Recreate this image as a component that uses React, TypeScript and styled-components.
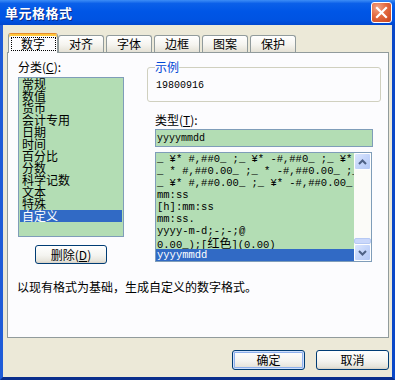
import styled, { createGlobalStyle, css } from "styled-components";

const CJK = `"Noto Sans CJK SC", "Liberation Sans", sans-serif`;
const MONO = `"Liberation Mono", "Noto Sans CJK SC", monospace`;
const GREEN = "#B3DDB4";
const SELECT = "#316AC5";

const GlobalStyle = createGlobalStyle`
  html, body {
    margin: 0;
    padding: 0;
    background: #ECE9D8;
  }
  body {
    font-family: ${CJK};
    font-size: 12px;
    color: #000;
  }
  * {
    box-sizing: border-box;
  }
`;

const Window = styled.div`
  width: 395px;
  height: 380px;
  display: flex;
  flex-direction: column;
  background: #ECE9D8;
`;

const TitleBar = styled.div`
  height: 25px;
  flex: none;
  display: flex;
  align-items: center;
  justify-content: space-between;
  padding: 0 3px 0 5px;
  background: linear-gradient(180deg, #3D8DF6 0%, #0B60E9 14%, #0056E6 45%, #0053E2 80%, #0047CF 100%);
`;

const Title = styled.span`
  color: #fff;
  font-family: ${CJK};
  font-weight: bold;
  font-size: 13px;
  letter-spacing: 0.5px;
  text-shadow: 1px 1px 0 #0A2A8A;
`;

const CloseButton = styled.div`
  width: 21px;
  height: 21px;
  border: 1px solid #fff;
  border-radius: 3px;
  background: radial-gradient(circle at 30% 25%, #F2A487 0%, #E3693F 45%, #C8431C 100%);
  display: flex;
  align-items: center;
  justify-content: center;
`;

const Frame = styled.div`
  flex: 1;
  display: flex;
  flex-direction: column;
  border-left: 3px solid #1F5CD8;
  border-right: 3px solid #0A48C8;
  border-bottom: 3px solid #0A2E8C;
  padding: 0 3px 0 4px;
`;

const TabStrip = styled.div`
  height: 27px;
  flex: none;
  display: flex;
  align-items: flex-end;
  gap: 2px;
  padding-left: 3px;
  position: relative;
  z-index: 1;
`;

const Tab = styled.div<{ $active?: boolean }>`
  width: 46px;
  height: 17px;
  display: flex;
  align-items: center;
  justify-content: center;
  border: 1px solid #919B9C;
  border-bottom: 0;
  border-radius: 3px 3px 0 0;
  background: linear-gradient(180deg, #FFFFFF 0%, #F5F4EF 55%, #E4E1D5 100%);
  font-size: 12px;
  line-height: 14px;
  ${(p) =>
    p.$active &&
    css`
      width: 50px;
      height: 20px;
      margin: 0 -2px -1px;
      background: #FCFCFE;
      border-top: 1px solid #E68B2C;
      box-shadow: inset 0 2px 0 #FFC83C;
      padding-top: 1px;
    `}
`;

const FocusLabel = styled.span`
  display: flex;
  align-items: center;
  justify-content: center;
  width: 45px;
  height: 14px;
  border: 1px dotted #000;
`;

const Panel = styled.div`
  height: 286px;
  flex: none;
  display: flex;
  flex-direction: column;
  border: 1px solid #919B9C;
  background: #FCFCFE;
  padding: 0 6px 0 10px;
`;

const Columns = styled.div`
  display: grid;
  grid-template-columns: 106px 234px;
  column-gap: 23px;
  align-items: start;
`;

const LeftColumn = styled.div`
  display: flex;
  flex-direction: column;
`;

const RightColumn = styled.div`
  display: flex;
  flex-direction: column;
`;

const Label = styled.div<{ $top: number; $left?: number }>`
  margin: ${(p) => p.$top}px 0 0 ${(p) => p.$left ?? 0}px;
  height: 14px;
  line-height: 14px;
  font-size: 12px;
  white-space: nowrap;
`;

const CategoryList = styled.div`
  margin-top: 3px;
  height: 160px;
  border: 1px solid #7F9DB9;
  background: ${GREEN};
  padding: 0 1px;
`;

const CategoryItem = styled.div<{ $selected?: boolean }>`
  height: 12px;
  line-height: 12px;
  padding-left: 2px;
  font-size: 12px;
  white-space: nowrap;
  ${(p) =>
    p.$selected &&
    css`
      background: ${SELECT};
      color: #fff;
    `}
`;

const Button = styled.button<{ $w: number; $h: number; $default?: boolean }>`
  width: ${(p) => p.$w}px;
  height: ${(p) => p.$h}px;
  padding: 0;
  border: 1px solid #003C74;
  border-radius: 3px;
  background: linear-gradient(180deg, #FFFFFF 0%, #F4F4F0 55%, #E6E4DB 88%, #D6D0C5 100%);
  font-family: ${CJK};
  font-size: 12px;
  line-height: 14px;
  color: #000;
  ${(p) =>
    p.$default &&
    css`
      box-shadow: inset 0 0 0 1px #CFE0FC, inset 0 0 0 2px #8EB0EC;
    `}
`;

const DeleteButton = styled(Button)`
  margin-top: 8px;
  align-self: center;
`;

const GroupBox = styled.fieldset`
  margin: 7px 0 0;
  min-width: 0;
  border: 1px solid #D0D0BF;
  border-radius: 3px;
  padding: 5px 6px 8px 7px;
`;

const GroupLegend = styled.legend`
  padding: 0;
  height: 14px;
  line-height: 14px;
  font-size: 12px;
  color: #0046D5;
`;

const SampleText = styled.div`
  height: 14px;
  line-height: 14px;
  padding-left: 1px;
  font-family: ${MONO};
  font-size: 10px;
`;

const TypeInput = styled.input`
  margin: 2px 8px 0 8px;
  height: 18px;
  border: 1px solid #7F9DB9;
  background: ${GREEN};
  padding: 0 0 0 1px;
  font-family: ${MONO};
  font-size: 10px;
  color: #000;
  outline: none;
`;

const FormatList = styled.div`
  margin: 5px 9px 0 8px;
  height: 110px;
  border: 1px solid #7F9DB9;
  background: ${GREEN};
  display: flex;
`;

const FormatRows = styled.div`
  flex: 1;
  min-width: 0;
  overflow: hidden;
`;

const FormatRow = styled.div<{ $selected?: boolean }>`
  height: 12px;
  line-height: 12px;
  padding-left: 1px;
  font-family: ${MONO};
  font-size: 10.5px;
  white-space: nowrap;
  overflow: hidden;
  ${(p) =>
    p.$selected &&
    css`
      background: ${SELECT};
      color: #fff;
    `}
`;

const Cjk = styled.span`
  font-family: ${CJK};
  font-size: 12px;
`;

const ScrollBar = styled.div`
  width: 17px;
  flex: none;
  display: flex;
  flex-direction: column;
  background: #FBFBF8;
`;

const ScrollButton = styled.div`
  height: 17px;
  flex: none;
  border: 1px solid #FFFFFF;
  border-radius: 2px;
  background: linear-gradient(135deg, #DCE7FE 0%, #C4D5FA 50%, #B3C8F5 100%);
  display: flex;
  align-items: center;
  justify-content: center;
`;

const ScrollTrack = styled.div`
  flex: 1;
  display: flex;
  flex-direction: column;
  justify-content: flex-end;
`;

const ScrollThumb = styled.div`
  height: 6px;
  border: 1px solid #B6C9F3;
  border-radius: 2px;
  background: #CAD8FB;
`;

const Description = styled.div`
  margin: 16px 0 0 -1px;
  height: 14px;
  line-height: 14px;
  font-size: 12px;
`;

const ButtonRow = styled.div`
  margin-top: 12px;
  display: flex;
  justify-content: flex-end;
  gap: 11px;
`;

const tabs = ["数字", "对齐", "字体", "边框", "图案", "保护"];

const categories = [
  "常规",
  "数值",
  "货币",
  "会计专用",
  "日期",
  "时间",
  "百分比",
  "分数",
  "科学记数",
  "文本",
  "特殊",
  "自定义",
];

function Chevron({ up }: { up?: boolean }) {
  return (
    <svg width="9" height="6" viewBox="0 0 9 6">
      <polyline
        points={up ? "1,5 4.5,1.5 8,5" : "1,1 4.5,4.5 8,1"}
        fill="none"
        stroke="#4D6185"
        strokeWidth="2"
      />
    </svg>
  );
}

export default function App() {
  return (
    <>
      <GlobalStyle />
      <Window>
        <TitleBar>
          <Title>单元格格式</Title>
          <CloseButton>
            <svg width="13" height="13" viewBox="0 0 13 13">
              <path d="M2 2 L11 11 M11 2 L2 11" stroke="#fff" strokeWidth="2.2" strokeLinecap="square" />
            </svg>
          </CloseButton>
        </TitleBar>
        <Frame>
          <TabStrip>
            {tabs.map((t, i) =>
              i === 0 ? (
                <Tab key={t} $active>
                  <FocusLabel>{t}</FocusLabel>
                </Tab>
              ) : (
                <Tab key={t}>{t}</Tab>
              )
            )}
          </TabStrip>
          <Panel>
            <Columns>
              <LeftColumn>
                <Label $top={7}>
                  分类(<u>C</u>):
                </Label>
                <CategoryList>
                  {categories.map((c) => (
                    <CategoryItem key={c} $selected={c === "自定义"}>
                      {c}
                    </CategoryItem>
                  ))}
                </CategoryList>
                <DeleteButton $w={72} $h={19}>
                  删除(<u>D</u>)
                </DeleteButton>
              </LeftColumn>
              <RightColumn>
                <GroupBox>
                  <GroupLegend>示例</GroupLegend>
                  <SampleText>19800916</SampleText>
                </GroupBox>
                <Label $top={11} $left={8}>
                  类型(<u>T</u>):
                </Label>
                <TypeInput readOnly value="yyyymmdd" />
                <FormatList>
                  <FormatRows>
                    <FormatRow>{'_ ¥* #,##0_ ;_ ¥* -#,##0_ ;_ ¥* "-"_ ;_ @_ '}</FormatRow>
                    <FormatRow>{'_ * #,##0.00_ ;_ * -#,##0.00_ ;_ * "-"??_ ;_ @_ '}</FormatRow>
                    <FormatRow>{'_ ¥* #,##0.00_ ;_ ¥* -#,##0.00_ ;_ ¥* "-"??_ ;_ @_ '}</FormatRow>
                    <FormatRow>mm:ss</FormatRow>
                    <FormatRow>[h]:mm:ss</FormatRow>
                    <FormatRow>mm:ss.</FormatRow>
                    <FormatRow>yyyy-m-d;-;-;@</FormatRow>
                    <FormatRow>
                      0.00_);[<Cjk>红色</Cjk>](0.00)
                    </FormatRow>
                    <FormatRow $selected>yyyymmdd</FormatRow>
                  </FormatRows>
                  <ScrollBar>
                    <ScrollButton>
                      <Chevron up />
                    </ScrollButton>
                    <ScrollTrack>
                      <ScrollThumb />
                    </ScrollTrack>
                    <ScrollButton>
                      <Chevron />
                    </ScrollButton>
                  </ScrollBar>
                </FormatList>
              </RightColumn>
            </Columns>
            <Description>以现有格式为基础，生成自定义的数字格式。</Description>
          </Panel>
          <ButtonRow>
            <Button $w={73} $h={20} $default>
              确定
            </Button>
            <Button $w={73} $h={20}>
              取消
            </Button>
          </ButtonRow>
        </Frame>
      </Window>
    </>
  );
}
